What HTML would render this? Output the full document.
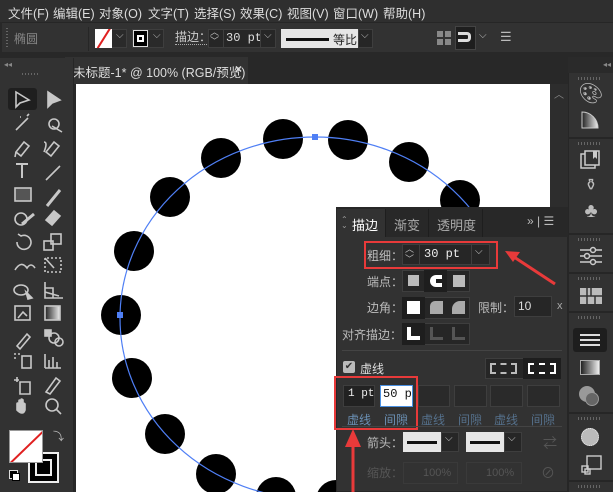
<!DOCTYPE html>
<html style="overflow:hidden;width:613px;height:492px"><head><meta charset="utf-8"><style>
*{margin:0;padding:0;box-sizing:border-box}
body{width:613px;height:492px;overflow:hidden;background:#282828;font-family:"Liberation Sans","Noto Sans CJK SC",sans-serif;color:#ccc;position:relative;font-size:12px}
.a{position:absolute}
.menu span{position:absolute;top:3px;font-size:12.5px;color:#ddd}
.btn{position:absolute;background:#262626;border:1px solid #3e3e3e}
.lbl{position:absolute;font-size:12px;color:#bbb}
.rs{position:absolute;left:574px;width:34px;text-align:center;color:#bbb}
.grip{position:absolute;left:578px;width:24px;height:3px;background:repeating-linear-gradient(90deg,#666 0 1px,transparent 1px 3px)}
</style></head><body>
<div class="a menu" style="left:0;top:0;width:613px;height:22px;background:#2f2f2f">
<span style="left:8px">文件(F)</span><span style="left:53px">编辑(E)</span><span style="left:99px">对象(O)</span><span style="left:148px">文字(T)</span><span style="left:194px">选择(S)</span><span style="left:240px">效果(C)</span><span style="left:287px">视图(V)</span><span style="left:333px">窗口(W)</span><span style="left:383px">帮助(H)</span>
</div>
<div class="a" style="left:2px;top:22px;width:611px;height:30px;background:#323232;border-top:1px solid #262626"></div>
<div class="a" style="left:6px;top:28px;width:2px;height:20px;background:repeating-linear-gradient(#666 0 1px,transparent 1px 3px)"></div>
<div class="lbl" style="left:14px;top:30px;color:#888">椭圆</div>
<div class="a" style="left:88px;top:27px;width:1px;height:24px;background:#262626"></div>
<div class="a" style="left:95px;top:29px;width:32px;height:19px;background:#2a2a2a;border:1px solid #3e3e3e"></div>
<div class="a" style="left:95px;top:29px;width:17px;height:19px;background:#fff;overflow:hidden"><div class="a" style="left:-3px;top:8px;width:24px;height:2px;background:#e02020;transform:rotate(-58deg)"></div></div>
<div class="a" style="left:116px;top:30px;color:#bbb;font-size:10px">⌵</div>
<div class="a" style="left:132px;top:29px;width:32px;height:19px;background:#2a2a2a;border:1px solid #3e3e3e"></div>
<div class="a" style="left:133px;top:30px;width:15px;height:17px;background:#000;border:1px solid #ddd"></div>
<div class="a" style="left:137px;top:35px;width:7px;height:7px;border:2px solid #fff"></div>
<div class="a" style="left:153px;top:30px;color:#bbb;font-size:10px">⌵</div>
<div class="lbl" style="left:175px;top:31px;color:#ccc;border-bottom:1px dotted #aaa;line-height:13px">描边：</div>
<div class="btn" style="left:208px;top:29px;width:68px;height:19px"></div>
<div class="a" style="left:210px;top:28px;color:#bbb;font-size:9px;line-height:9px">︿<br>﹀</div>
<div class="a" style="left:223px;top:29px;width:1px;height:19px;background:#3e3e3e"></div>
<div class="a" style="left:226px;top:31px;font-family:'Liberation Mono',monospace;color:#ddd;font-size:12px">30 pt</div>
<div class="a" style="left:260px;top:29px;width:1px;height:19px;background:#3e3e3e"></div>
<div class="a" style="left:264px;top:30px;color:#bbb;font-size:10px">⌵</div>
<div class="a" style="left:281px;top:29px;width:77px;height:19px;background:#e6e6e6"></div>
<div class="a" style="left:286px;top:38px;width:43px;height:3px;background:#111"></div>
<div class="a" style="left:333px;top:31px;color:#222;font-size:12px">等比</div>
<div class="btn" style="left:358px;top:29px;width:15px;height:19px"></div>
<div class="a" style="left:361px;top:30px;color:#bbb;font-size:10px">⌵</div>
<div class="a" style="left:437px;top:31px;width:6px;height:6px;background:#888"></div><div class="a" style="left:445px;top:31px;width:6px;height:6px;background:#888"></div><div class="a" style="left:437px;top:39px;width:6px;height:6px;background:#888"></div><div class="a" style="left:445px;top:39px;width:6px;height:6px;background:#888"></div>
<div class="a" style="left:455px;top:26px;width:21px;height:24px;background:#1e1e1e;border:1px solid #444"></div>
<div class="a" style="left:460px;top:32px;width:11px;height:10px;border:3px solid #ddd;border-left:none;border-radius:0 4px 4px 0"></div>
<div class="a" style="left:458px;top:32px;width:3px;height:3px;background:#ddd"></div><div class="a" style="left:458px;top:39px;width:3px;height:3px;background:#ddd"></div>
<div class="a" style="left:479px;top:30px;color:#bbb;font-size:10px">⌵</div>
<div class="a" style="left:500px;top:29px;color:#bbb;font-size:13px">☰</div>
<div class="a" style="left:65px;top:57px;width:183px;height:27px;background:#323232"></div>
<div class="a" style="left:73px;top:62px;color:#ddd;font-size:12.5px">未标题-1* @ 100% (RGB/预览)</div>
<div class="a" style="left:235px;top:62px;color:#ddd;font-size:12px;font-weight:bold">×</div>
<div class="a" style="left:0;top:58px;width:74px;height:434px;background:#323232;border-right:1px solid #262626"></div>
<div class="a" style="left:4px;top:60px;color:#888;font-size:8px">◂◂</div>
<div class="a" style="left:22px;top:73px;width:16px;height:2px;background:repeating-linear-gradient(90deg,#666 0 1px,transparent 1px 3px)"></div>
<div class="a" style="left:8px;top:88px;width:29px;height:22px;background:#1f1f1f;border-radius:3px"></div>
<svg class="a" style="left:0;top:80px" width="74" height="412" viewBox="0 0 74 412" fill="none" stroke="#c8c8c8" stroke-width="1.6">
<path d="M16 12 L16 27 L20 23 L29 20 Z"/>
<path d="M48 12 L48 27 L52 23 L60 20 Z" fill="#c8c8c8"/>
<path d="M16 50 L28 38 M27 36 l2 -2 M20 37 l1 0"/>
<circle cx="54" cy="44" r="5"/><path d="M52 46 L62 52"/>
<path d="M16 72 l8-10 l5 4 l-8 10 z M16 72 l-1 5"/>
<path d="M46 72 l8-10 l5 4 l-8 10 z M44 62 q4 0 0 10"/>
<path d="M16 84 h12 M22 84 v14" stroke-width="2"/>
<path d="M46 100 L60 86"/>
<rect x="15" y="108" width="16" height="13" fill="#555"/>
<path d="M47 126 L60 110" stroke-width="3"/>
<circle cx="21" cy="139" r="6"/><path d="M22 144 L34 134" stroke-width="3"/>
<path d="M46 140 l8-9 l6 5 l-8 9 z" fill="#c8c8c8"/>
<path d="M17 162 a7 7 0 1 0 4-6 l-3-2"/>
<rect x="44" y="161" width="9" height="9"/><rect x="51" y="154" width="10" height="10"/>
<path d="M15 190 q6-10 12-2 q4-6 8 0"/>
<path d="M45 178 v14 h16 v-14 z" stroke-dasharray="2 2"/><path d="M45 178 l9 10" />
<ellipse cx="21" cy="210" rx="7" ry="5"/><path d="M26 212 l6 6 l-4 1 z" fill="#c8c8c8"/>
<path d="M45 202 v16 h18 M45 208 l8 0 l0 10 M45 212 l14 4"/>
<rect x="15" y="226" width="15" height="14"/><path d="M18 238 l5-6 l4 4"/>
<rect x="45" y="226" width="15" height="14" fill="url(#g)"/>
<path d="M17 266 l10-12 l3 3 l-10 12 z"/>
<rect x="45" y="250" width="6" height="6" fill="#c8c8c8"/><circle cx="54" cy="258" r="5"/><circle cx="59" cy="262" r="4"/>
<rect x="22" y="276" width="9" height="12"/><path d="M14 274 h2 M18 274 h2 M14 278 h2"/>
<path d="M45 288 v-14 M49 288 v-8 M53 288 v-11 M57 288 v-6 M45 288 h16"/>
<path d="M14 300 h5 M17 297 v5 M20 302 h10 v12 h-10 z"/>
<path d="M46 312 l10-14 l4 3 l-10 13 z"/>
<path d="M17 330 v-6 q0-2 2 0 v-3 q0-2 2 0 v-1 q0-2 2 0 v4 q0-2 2 0 v6 q-2 6 -8 0 z" fill="#c8c8c8"/>
<circle cx="52" cy="325" r="6"/><path d="M56 329 l5 5"/>
<defs><linearGradient id="g"><stop offset="0" stop-color="#222"/><stop offset="1" stop-color="#eee"/></linearGradient></defs>
</svg>
<div class="a" style="left:28px;top:452px;width:31px;height:31px;border:2px solid #eee;background:#000"></div>
<div class="a" style="left:35px;top:459px;width:17px;height:17px;border:2px solid #eee"></div>
<div class="a" style="left:9px;top:430px;width:34px;height:33px;background:#fff;border:1px solid #999;overflow:hidden"><div class="a" style="left:-7px;top:15px;width:48px;height:2px;background:#e02020;transform:rotate(-44deg)"></div></div>
<div class="a" style="left:53px;top:428px;color:#bbb;font-size:11px">⤵</div>
<div class="a" style="left:9px;top:470px;width:9px;height:9px;border:1px solid #ddd;background:#000"></div>
<div class="a" style="left:12px;top:473px;width:8px;height:8px;border:1px solid #000;background:#fff"></div>
<div class="a" style="left:76px;top:84px;width:474px;height:408px;background:#fff"></div>
<div class="a" style="left:550px;top:84px;width:18px;height:408px;background:#2d2d2d"></div>
<div class="a" style="left:554px;top:86px;color:#888;font-size:10px">︿</div>
<svg class="a" style="left:0;top:0" width="613" height="492">
<g fill="#000">
<circle cx="121" cy="315" r="20"/><circle cx="134" cy="251" r="20"/><circle cx="170" cy="197" r="20"/><circle cx="221" cy="158" r="20"/><circle cx="283" cy="139" r="20"/><circle cx="348" cy="140" r="20"/><circle cx="409" cy="162" r="20"/><circle cx="460" cy="200" r="20"/><circle cx="132" cy="378" r="20"/><circle cx="165" cy="434" r="20"/><circle cx="216" cy="474" r="20"/><circle cx="276" cy="497" r="20"/><circle cx="336" cy="500" r="20"/>
</g>
<ellipse cx="315" cy="318" rx="195" ry="181" fill="none" stroke="#4f7ff5" stroke-width="1.2"/>
<rect x="312" y="134" width="6" height="6" fill="#4f7ff5"/><rect x="117" y="312" width="6" height="6" fill="#4f7ff5"/>
</svg>
<div class="a" style="left:568px;top:57px;width:45px;height:435px;background:#323232;border-left:1px solid #262626"></div>
<div class="a" style="left:568px;top:57px;width:45px;height:16px;background:#2a2a2a"></div>
<div class="a" style="left:603px;top:60px;color:#888;font-size:8px">◂◂</div>
<div class="grip" style="top:77px"></div>
<div class="rs" style="top:81px;font-size:20px">🎨︎</div>
<svg class="a" style="left:580px;top:110px" width="22" height="20"><path d="M2 18 V2 A16 16 0 0 1 18 18 Z" fill="url(#g)" stroke="#ccc"/></svg>
<div class="a" style="left:569px;top:137px;width:44px;height:2px;background:#262626"></div>
<div class="grip" style="top:142px"></div>
<svg class="a" style="left:579px;top:150px" width="24" height="20"><rect x="2" y="4" width="14" height="14" fill="none" stroke="#ccc" stroke-width="1.5"/><rect x="6" y="1" width="14" height="14" fill="#323232" stroke="#ccc" stroke-width="1.5"/><path d="M14 1 v8 l2-2 l2 2 v-8" fill="#ccc"/></svg>
<div class="rs" style="top:175px;font-size:16px">⚱︎</div>
<div class="rs" style="top:200px;font-size:20px">♣</div>
<div class="a" style="left:569px;top:233px;width:44px;height:2px;background:#262626"></div>
<div class="grip" style="top:238px"></div>
<svg class="a" style="left:579px;top:246px" width="24" height="20" stroke="#ccc" fill="#323232" stroke-width="1.5"><path d="M1 4 h22 M1 10 h22 M1 16 h22"/><circle cx="14" cy="4" r="2.5"/><circle cx="8" cy="10" r="2.5"/><circle cx="14" cy="16" r="2.5"/></svg>
<div class="a" style="left:569px;top:272px;width:44px;height:2px;background:#262626"></div>
<div class="grip" style="top:277px"></div>
<svg class="a" style="left:580px;top:288px" width="22" height="16"><rect x="0" y="0" width="22" height="16" fill="#bbb"/><path d="M0 8 h22 M7 0 v16 M15 8 v8 M11 0 v8" stroke="#323232" stroke-width="1.5"/></svg>
<div class="a" style="left:569px;top:311px;width:44px;height:2px;background:#262626"></div>
<div class="grip" style="top:316px"></div>
<div class="a" style="left:573px;top:328px;width:34px;height:24px;background:#1e1e1e;border-radius:3px"></div>
<div class="a" style="left:580px;top:334px;width:20px;height:12px;background:repeating-linear-gradient(#ddd 0 2px,transparent 2px 5px)"></div>
<div class="a" style="left:580px;top:360px;width:20px;height:15px;background:linear-gradient(90deg,#222,#eee);border:1px solid #aaa"></div>
<div class="a" style="left:579px;top:386px;width:16px;height:16px;border-radius:50%;background:#999"></div>
<div class="a" style="left:585px;top:392px;width:14px;height:14px;border-radius:50%;background:#666;border:1px solid #999"></div>
<div class="a" style="left:569px;top:412px;width:44px;height:2px;background:#262626"></div>
<div class="grip" style="top:417px"></div>
<div class="a" style="left:581px;top:428px;width:18px;height:18px;border-radius:50%;background:#bbb;border:1px dotted #eee"></div>
<svg class="a" style="left:580px;top:455px" width="22" height="20" fill="none" stroke="#ccc" stroke-width="1.4"><rect x="7" y="1" width="14" height="13"/><rect x="2" y="11" width="6" height="6"/><rect x="5" y="14" width="5" height="5"/></svg>
<div class="a" style="left:569px;top:480px;width:44px;height:2px;background:#262626"></div>
<div class="grip" style="top:485px"></div>
<div class="a" style="left:336px;top:207px;width:232px;height:285px;background:#323232;border:1px solid #262626"></div>
<div class="a" style="left:336px;top:207px;width:232px;height:30px;background:#282828"></div>
<div class="a" style="left:337px;top:209px;width:49px;height:28px;background:#323232"></div>
<div class="a" style="left:341px;top:217px;color:#999;font-size:8px;line-height:6px">⌃<br>⌄</div>
<div class="a" style="left:352px;top:215px;color:#fff;font-size:13px">描边</div>
<div class="a" style="left:394px;top:215px;color:#aaa;font-size:13px">渐变</div>
<div class="a" style="left:437px;top:215px;color:#aaa;font-size:13px">透明度</div>
<div class="a" style="left:385px;top:209px;width:1px;height:28px;background:#1e1e1e"></div>
<div class="a" style="left:428px;top:209px;width:1px;height:28px;background:#1e1e1e"></div>
<div class="a" style="left:482px;top:209px;width:1px;height:28px;background:#1e1e1e"></div>
<div class="a" style="left:527px;top:214px;color:#bbb;font-size:12px">»&nbsp;|&nbsp;☰</div>
<div class="a" style="left:364px;top:241px;width:134px;height:28px;border:2px solid #e83a3a"></div>
<div class="lbl" style="left:367px;top:247px">粗细：</div>
<div class="btn" style="left:402px;top:244px;width:88px;height:21px"></div>
<div class="a" style="left:405px;top:244px;color:#bbb;font-size:9px;line-height:10px">︿<br>﹀</div>
<div class="a" style="left:419px;top:244px;width:1px;height:21px;background:#3e3e3e"></div>
<div class="a" style="left:424px;top:247px;font-family:'Liberation Mono',monospace;color:#eee;font-size:12px">30 pt</div>
<div class="a" style="left:471px;top:244px;width:1px;height:21px;background:#3e3e3e"></div>
<div class="a" style="left:475px;top:246px;color:#ccc;font-size:10px">⌵</div>
<svg class="a" style="left:500px;top:245px" width="60" height="45"><path d="M55 39 L14 12" stroke="#e83a3a" stroke-width="3"/><path d="M5 6 L20 7 L13 17 Z" fill="#e83a3a"/></svg>
<div class="lbl" style="left:367px;top:273px">端点：</div>
<div class="btn" style="left:402px;top:270px;width:68px;height:22px"></div>
<div class="a" style="left:424px;top:270px;width:23px;height:22px;background:#1e1e1e"></div>
<div class="a" style="left:408px;top:275px;width:11px;height:11px;background:#bbb"></div>
<div class="a" style="left:430px;top:275px;width:12px;height:12px;background:#fff;border-radius:6px 0 0 6px"></div><div class="a" style="left:436px;top:279px;width:6px;height:4px;background:#1e1e1e"></div>
<div class="a" style="left:453px;top:275px;width:12px;height:12px;background:#bbb"></div>
<div class="lbl" style="left:367px;top:299px">边角：</div>
<div class="btn" style="left:402px;top:297px;width:68px;height:22px"></div>
<div class="a" style="left:402px;top:297px;width:23px;height:22px;background:#1e1e1e"></div>
<div class="a" style="left:407px;top:301px;width:13px;height:13px;background:#fff"></div>
<div class="a" style="left:430px;top:301px;width:13px;height:13px;background:#aaa;border-radius:5px 0 0 0"></div>
<div class="a" style="left:452px;top:301px;width:13px;height:13px;background:#aaa;border-radius:8px 0 0 0"></div>
<div class="lbl" style="left:478px;top:299px">限制：</div>
<div class="btn" style="left:514px;top:296px;width:38px;height:21px"></div>
<div class="a" style="left:518px;top:299px;color:#ddd;font-size:12px">10</div>
<div class="a" style="left:557px;top:300px;color:#aaa;font-size:11px">x</div>
<div class="lbl" style="left:342px;top:326px">对齐描边：</div>
<div class="btn" style="left:402px;top:323px;width:68px;height:22px"></div>
<div class="a" style="left:402px;top:323px;width:23px;height:22px;background:#1e1e1e"></div>
<div class="a" style="left:407px;top:327px;width:13px;height:13px;border-left:4px solid #fff;border-bottom:4px solid #fff"></div>
<div class="a" style="left:430px;top:327px;width:13px;height:13px;border-left:3px solid #555;border-bottom:3px solid #555"></div>
<div class="a" style="left:452px;top:327px;width:13px;height:13px;border-left:3px solid #555;border-bottom:3px solid #555"></div>
<div class="a" style="left:342px;top:350px;width:220px;height:1px;background:#444"></div>
<div class="a" style="left:343px;top:361px;width:12px;height:12px;background:#bbb;border-radius:2px;color:#323232;font-size:10px;line-height:12px;text-align:center">✔</div>
<div class="a" style="left:360px;top:360px;color:#ddd;font-size:12px">虚线</div>
<div class="btn" style="left:485px;top:358px;width:76px;height:21px"></div>
<div class="a" style="left:523px;top:358px;width:38px;height:21px;background:#1e1e1e"></div>
<div class="a" style="left:490px;top:363px;width:27px;height:11px;border:2px dashed #bbb"></div>
<div class="a" style="left:528px;top:363px;width:28px;height:11px;border:2px dashed #fff"></div>
<div class="btn" style="left:343px;top:385px;width:32px;height:22px;background:#222"></div>
<div class="a" style="left:348px;top:388px;font-family:'Liberation Mono',monospace;color:#eee;font-size:11px">1 pt</div>
<div class="a" style="left:380px;top:385px;width:33px;height:22px;background:#fff;border:1px solid #4a90e2"></div>
<div class="a" style="left:383px;top:387px;font-family:'Liberation Mono',monospace;color:#111;font-size:12px">50 p</div>
<div class="btn" style="left:418px;top:385px;width:32px;height:22px;background:#2a2a2a"></div>
<div class="btn" style="left:454px;top:385px;width:33px;height:22px;background:#2a2a2a"></div>
<div class="btn" style="left:490px;top:385px;width:33px;height:22px;background:#2a2a2a"></div>
<div class="btn" style="left:527px;top:385px;width:33px;height:22px;background:#2a2a2a"></div>
<div class="a" style="left:347px;top:411px;color:#6a8fb3;font-size:12px">虚线</div>
<div class="a" style="left:384px;top:411px;color:#6a8fb3;font-size:12px">间隙</div>
<div class="a" style="left:421px;top:411px;color:#55708b;font-size:12px">虚线</div>
<div class="a" style="left:458px;top:411px;color:#55708b;font-size:12px">间隙</div>
<div class="a" style="left:494px;top:411px;color:#55708b;font-size:12px">虚线</div>
<div class="a" style="left:531px;top:411px;color:#55708b;font-size:12px">间隙</div>
<div class="a" style="left:334px;top:376px;width:84px;height:54px;border:2px solid #e83a3a"></div>
<div class="a" style="left:342px;top:426px;width:220px;height:1px;background:#444"></div>
<div class="lbl" style="left:367px;top:434px">箭头：</div>
<div class="a" style="left:403px;top:432px;width:38px;height:20px;background:#e6e6e6"></div>
<div class="a" style="left:407px;top:441px;width:30px;height:3px;background:#111"></div>
<div class="btn" style="left:441px;top:432px;width:18px;height:20px"></div>
<div class="a" style="left:445px;top:433px;color:#ccc;font-size:10px">⌵</div>
<div class="a" style="left:466px;top:432px;width:38px;height:20px;background:#e6e6e6"></div>
<div class="a" style="left:470px;top:441px;width:30px;height:3px;background:#111"></div>
<div class="btn" style="left:504px;top:432px;width:18px;height:20px"></div>
<div class="a" style="left:508px;top:433px;color:#ccc;font-size:10px">⌵</div>
<div class="a" style="left:543px;top:433px;color:#555;font-size:14px">⇄</div>
<div class="lbl" style="left:367px;top:464px;color:#555">缩放：</div>
<div class="a" style="left:403px;top:462px;width:55px;height:22px;border:1px solid #3a3a3a;color:#555;font-size:11px;padding:4px 0 0 19px">100%</div>
<div class="a" style="left:466px;top:462px;width:56px;height:22px;border:1px solid #3a3a3a;color:#555;font-size:11px;padding:4px 0 0 19px">100%</div>
<div class="a" style="left:541px;top:463px;color:#555;font-size:14px">⊘</div>
<svg class="a" style="left:340px;top:425px" width="26" height="67"><path d="M13 67 L13 20" stroke="#e83a3a" stroke-width="3"/><path d="M5 22 L13 4 L21 22 Z" fill="#e83a3a"/></svg>
</body></html>
